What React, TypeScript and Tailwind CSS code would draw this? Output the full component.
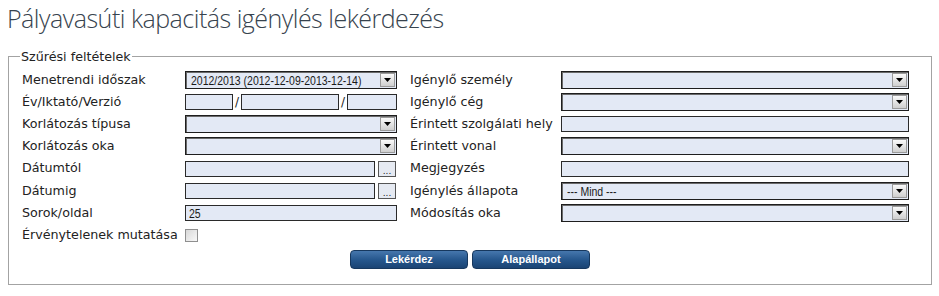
import React from "react";

const FIELD_BG = "bg-[#e3e9f5]";

function Arrow() {
  return (
    <div className="ml-auto mr-[1px] flex h-[14px] w-[15px] shrink-0 items-center justify-center border border-[#9a9a9a] bg-gradient-to-b from-[#fafafa] to-[#cfcfcf]">
      <svg width="7" height="4" viewBox="0 0 7 4">
        <polygon points="0,0 7,0 3.5,4" fill="#000" />
      </svg>
    </div>
  );
}

function Narrow({ children }: { children?: React.ReactNode }) {
  return (
    <span className="inline-block origin-left scale-x-[0.84] whitespace-nowrap text-[12.5px] leading-none text-[#1a1a1a] [font-family:'Liberation_Sans',Arial,sans-serif]">
      {children}
    </span>
  );
}

function Select({ value, w }: { value?: string; w: string }) {
  return (
    <div className={`flex h-[18px] items-center overflow-hidden border border-[#1e1e1e] shadow-[inset_1px_1px_0_#6a6a6a] ${FIELD_BG} ${w}`}>
      <div className="min-w-0 flex-1 pl-[5px]">
        <Narrow>{value}</Narrow>
      </div>
      <Arrow />
    </div>
  );
}

function Input({ value, w }: { value?: string; w: string }) {
  return (
    <div className={`flex h-[16px] items-center border border-[#2a2a2a] ${FIELD_BG} ${w}`}>
      <div className="pl-[3px]">
        <Narrow>{value}</Narrow>
      </div>
    </div>
  );
}

function DateField() {
  return (
    <div className="flex w-[212px] items-center gap-[3px]">
      <Input w="w-[190px]" />
      <div className="flex h-[16px] w-[18px] items-end justify-center border border-[#555] bg-[#e6eaf2] pb-[1px] text-[9px] leading-[8px] text-[#222] [font-family:'DejaVu_Sans',sans-serif]">
        ...
      </div>
    </div>
  );
}

function Label({ children }: { children: React.ReactNode }) {
  return <div className="whitespace-nowrap text-[12.7px] leading-none text-[#222]">{children}</div>;
}

export default function App() {
  return (
    <div className="h-[296px] w-[939px] bg-white [font-family:'DejaVu_Sans',Verdana,sans-serif]">
      <h1 className="h-[49px] pl-[7px] pt-[1px] text-[25px] font-light leading-[34px] tracking-[-0.5px] text-[#37434e] [font-family:'Open_Sans',sans-serif]">
        Pályavasúti kapacitás igénylés lekérdezés
      </h1>
      <fieldset className="ml-[8px] w-[924px] border border-[#a3a3a3] px-[13px] pb-[15px] pt-[5px]">
        <legend className="-ml-[2px] px-[1px] text-[12.7px] leading-[15px] text-[#222]">Szűrési feltételek</legend>
        <div className="grid grid-cols-[163px_212px_13px_151px_348px] grid-rows-[22px_22px_22px_22px_23px_22px_22px_22px] items-center">
          <Label>Menetrendi időszak</Label>
          <Select w="w-[212px]" value="2012/2013 (2012-12-09-2013-12-14)" />
          <div />
          <Label>Igénylő személy</Label>
          <Select w="w-[348px]" />

          <Label>Év/Iktató/Verzió</Label>
          <div className="flex w-[212px] items-center">
            <Input w="w-[48px]" />
            <span className="w-[8px] text-center text-[12px] leading-none text-[#222]">/</span>
            <Input w="w-[98px]" />
            <span className="w-[8px] text-center text-[12px] leading-none text-[#222]">/</span>
            <Input w="w-[50px]" />
          </div>
          <div />
          <Label>Igénylő cég</Label>
          <Select w="w-[348px]" />

          <Label>Korlátozás típusa</Label>
          <Select w="w-[212px]" />
          <div />
          <Label>Érintett szolgálati hely</Label>
          <Input w="w-[348px]" />

          <Label>Korlátozás oka</Label>
          <Select w="w-[212px]" />
          <div />
          <Label>Érintett vonal</Label>
          <Select w="w-[348px]" />

          <Label>Dátumtól</Label>
          <DateField />
          <div />
          <Label>Megjegyzés</Label>
          <Input w="w-[348px]" />

          <Label>Dátumig</Label>
          <DateField />
          <div />
          <Label>Igénylés állapota</Label>
          <Select w="w-[348px]" value="--- Mind ---" />

          <Label>Sorok/oldal</Label>
          <Input w="w-[212px]" value="25" />
          <div />
          <Label>Módosítás oka</Label>
          <Select w="w-[348px]" />

          <Label>Érvénytelenek mutatása</Label>
          <div className="flex">
            <div className="h-[13px] w-[13px] border border-[#8f8f8f] bg-gradient-to-br from-[#d8d8d8] to-[#f8f8f8]" />
          </div>
        </div>
        <div className="mt-[4px] flex justify-center gap-[4px]">
          {["Lekérdez", "Alapállapot"].map((t) => (
            <button
              key={t}
              className="h-[19px] w-[118px] rounded-[4px] border border-[#17385e] bg-gradient-to-b from-[#4677ad] via-[#27588e] to-[#1b4474] text-[11px] font-bold leading-none text-white [font-family:'Liberation_Sans',Arial,sans-serif]"
            >
              {t}
            </button>
          ))}
        </div>
      </fieldset>
    </div>
  );
}
